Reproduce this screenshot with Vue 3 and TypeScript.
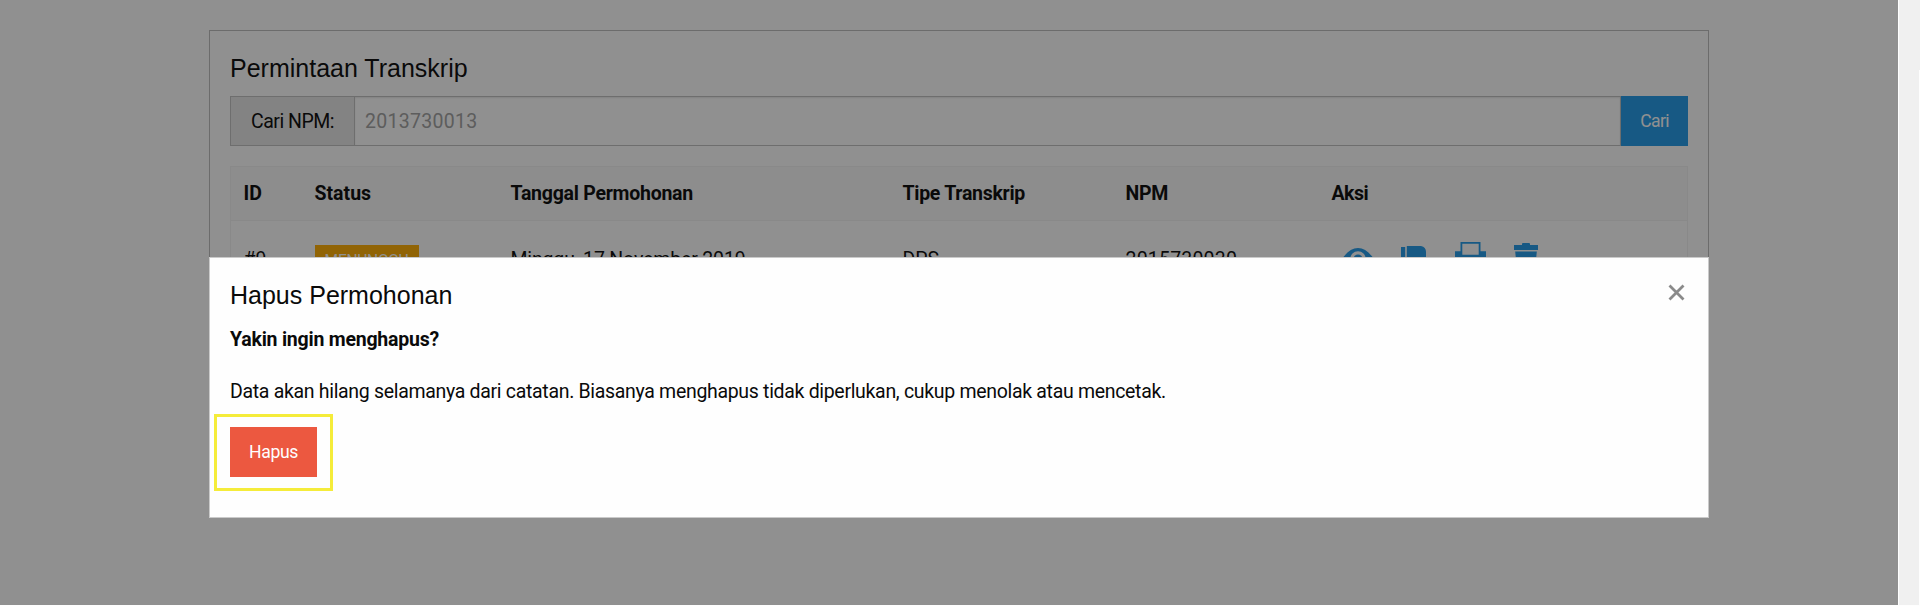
<script setup lang="ts">
import { ref } from 'vue'

interface TranscriptRequest {
  id: number
  status: string
  date: string
  type: string
  npm: string
}

const npmQuery = ref('')
const requests = ref<TranscriptRequest[]>([
  { id: 9, status: 'MENUNGGU', date: 'Minggu, 17 November 2019', type: 'DPS', npm: '2015730030' },
])
</script>

<template>
  <div class="window">
    <div class="viewport">
      <main class="callout">
        <h5 class="title">Permintaan Transkrip</h5>
        <div class="input-group">
          <span class="group-label">Cari NPM:</span>
          <input v-model="npmQuery" class="field" type="text" placeholder="2013730013" />
          <button class="button search">Cari</button>
        </div>
        <div class="table">
          <div class="row head">
            <span class="h-id">ID</span>
            <span class="h-status">Status</span>
            <span class="h-date">Tanggal Permohonan</span>
            <span class="h-type">Tipe Transkrip</span>
            <span class="h-npm">NPM</span>
            <span class="h-action">Aksi</span>
          </div>
          <div v-for="r in requests" :key="r.id" class="row">
            <span>#{{ r.id }}</span>
            <span><b class="badge">{{ r.status }}</b></span>
            <span class="date">{{ r.date }}</span>
            <span>{{ r.type }}</span>
            <span class="number">{{ r.npm }}</span>
            <span class="actions">
              <svg class="eye" viewBox="0 0 32 22">
                <path fill-rule="evenodd" d="M0 11C5 4 10 0 16 0s11 4 16 11c-5 7-10 11-16 11S5 18 0 11zM16 3.2a7.8 7.8 0 1 0 0 15.6 7.8 7.8 0 0 0 0-15.6z" />
                <circle cx="16" cy="11" r="4.6" />
              </svg>
              <svg class="dislike" viewBox="0 0 25 28">
                <path d="M0 1h4.2v16H0zM5.8 0H20q5 1 5 6v9q0 2-3 2h-7v8q0 3-3 3L10 20l-4.2-4z" />
              </svg>
              <svg class="print" viewBox="0 0 31 28">
                <path fill-rule="evenodd" d="M5.5 0h20v9.3H31V22h-5v6H5v-6H0V9.3h5.5zM7.3 1.8v11h16.4v-11zM8 18v7h15v-7z" />
              </svg>
              <svg class="trash" viewBox="0 0 24 28">
                <path d="M0 2h8V.9Q8 0 9 0h6q1 0 1 .9V2h8v5H0zM1.2 8.4h21.6L21 28H3z" />
              </svg>
            </span>
          </div>
        </div>
      </main>
      <div class="overlay">
        <section class="modal">
          <h5 class="title">Hapus Permohonan</h5>
          <p class="question">Yakin ingin menghapus?</p>
          <p class="detail">Data akan hilang selamanya dari catatan. Biasanya menghapus tidak diperlukan, cukup menolak atau mencetak.</p>
          <div class="confirm">
            <button class="button delete">Hapus</button>
            <span class="highlight"></span>
          </div>
          <button class="close" aria-label="Tutup">
            <svg viewBox="0 0 17 17"><path d="M1.5 1.5l14 14M15.5 1.5l-14 14" /></svg>
          </button>
        </section>
      </div>
    </div>
    <div class="scrollbar"><div class="track-edge"></div></div>
  </div>
</template>

<style>
body {
  margin: 0;
  overflow: hidden;
  background: #fefefe;
}
</style>

<style scoped>
* {
  box-sizing: border-box;
}
.window {
  display: flex;
  width: 1920px;
  height: 606px;
  overflow: hidden;
  color: #0a0a0a;
  font: 19.5px/32px Roboto, "Open Sans", sans-serif;
}
.viewport {
  position: relative;
  width: 1898px;
  height: 605px;
  padding-top: 30px;
  overflow: hidden;
}
.callout {
  width: 1500px;
  margin-left: 209px;
  padding: 20px;
  border: 1px solid #bcbcbc;
}
.title {
  margin: 0 0 10px;
  font: 400 25px/35px "Liberation Sans", Helvetica, sans-serif;
}
.input-group {
  display: flex;
  height: 50px;
  margin-bottom: 20px;
}
.group-label {
  width: 125px;
  border: 1px solid #c0c0c0;
  background: #e6e6e6;
  line-height: 49px;
  text-align: center;
  letter-spacing: -0.5px;
}
.field {
  flex: 1;
  min-width: 0;
  padding: 2px 10px 0;
  border: 1px solid #c0c0c0;
  border-left: 0;
  background: #fefefe;
  box-shadow: inset 0 1px 2px rgba(10, 10, 10, 0.1);
  font: inherit;
  letter-spacing: 0.28px;
}
.field::placeholder {
  color: #a0a0a0;
  opacity: 1;
}
.button {
  display: block;
  height: 50px;
  padding: 0;
  border: 0;
  color: #fefefe;
  font: 17.6px/51px Roboto, sans-serif;
  text-align: center;
}
.search {
  width: 67px;
  background: #2199e8;
  letter-spacing: -0.65px;
}
.table {
  border: 1px solid #f1f1f1;
}
.row {
  display: grid;
  grid-template-columns: 71px 196px 392px 223px 206px 1fr;
  align-items: center;
  height: 78px;
}
.row > span {
  padding-left: 12.5px;
  white-space: nowrap;
}
.head {
  height: 54px;
  border-bottom: 1px solid #f1f1f1;
  background: #f8f8f8;
  font-weight: 700;
}
.h-date { letter-spacing: -0.25px; }
.h-type { letter-spacing: -0.28px; }
.h-npm { letter-spacing: -0.3px; }
.h-action { letter-spacing: -0.5px; }
.date { letter-spacing: -0.16px; }
.number { letter-spacing: 0.2px; }
.badge {
  display: block;
  width: 104px;
  height: 32px;
  margin-top: 2px;
  background: #ffae00;
  color: #fefefe;
  font: 400 15.6px/33px Roboto, sans-serif;
  letter-spacing: -0.3px;
  text-align: center;
}
.actions {
  display: flex;
  align-items: flex-start;
  height: 36px;
  fill: #2199e8;
}
.eye { width: 32px; height: 22px; margin: 6px 0 0 10px; }
.dislike { width: 25px; height: 28px; margin: 4px 0 0 27px; }
.print { width: 31px; height: 28px; margin: 0 0 0 29px; }
.trash { width: 24px; height: 28px; margin: 1px 0 0 28px; }
.overlay {
  position: absolute;
  inset: 0;
  padding: 257px 0 0 209px;
  background: rgba(10, 10, 10, 0.45);
}
.modal {
  position: relative;
  width: 1500px;
  height: 261px;
  padding: 20px;
  border: 1px solid #cacaca;
  background: #fefefe;
}
.modal p {
  margin: 0;
  white-space: nowrap;
}
.modal .question {
  margin-top: 11px;
  font-weight: 700;
  letter-spacing: -0.22px;
}
.modal .detail {
  margin: 20px 0 19px;
  letter-spacing: -0.315px;
}
.confirm {
  position: relative;
  width: 87px;
}
.delete {
  width: 87px;
  background: #ec5840;
  letter-spacing: -0.4px;
}
.highlight {
  position: absolute;
  top: -13px;
  left: -16px;
  width: 119px;
  height: 77px;
  border: 3px solid #f5ec3a;
}
.close {
  position: absolute;
  top: 26px;
  right: 23px;
  width: 17px;
  height: 17px;
  padding: 0;
  border: 0;
  background: none;
}
.close svg {
  display: block;
  fill: none;
  stroke: #8a8a8a;
  stroke-width: 2.8;
}
.scrollbar {
  width: 22px;
  height: 605px;
  padding-top: 70px;
  border-left: 1px solid #fefefe;
  background: #f0f0f0;
}
.track-edge {
  width: 1px;
  height: 535px;
  margin-left: auto;
  background: #fefefe;
}
</style>
